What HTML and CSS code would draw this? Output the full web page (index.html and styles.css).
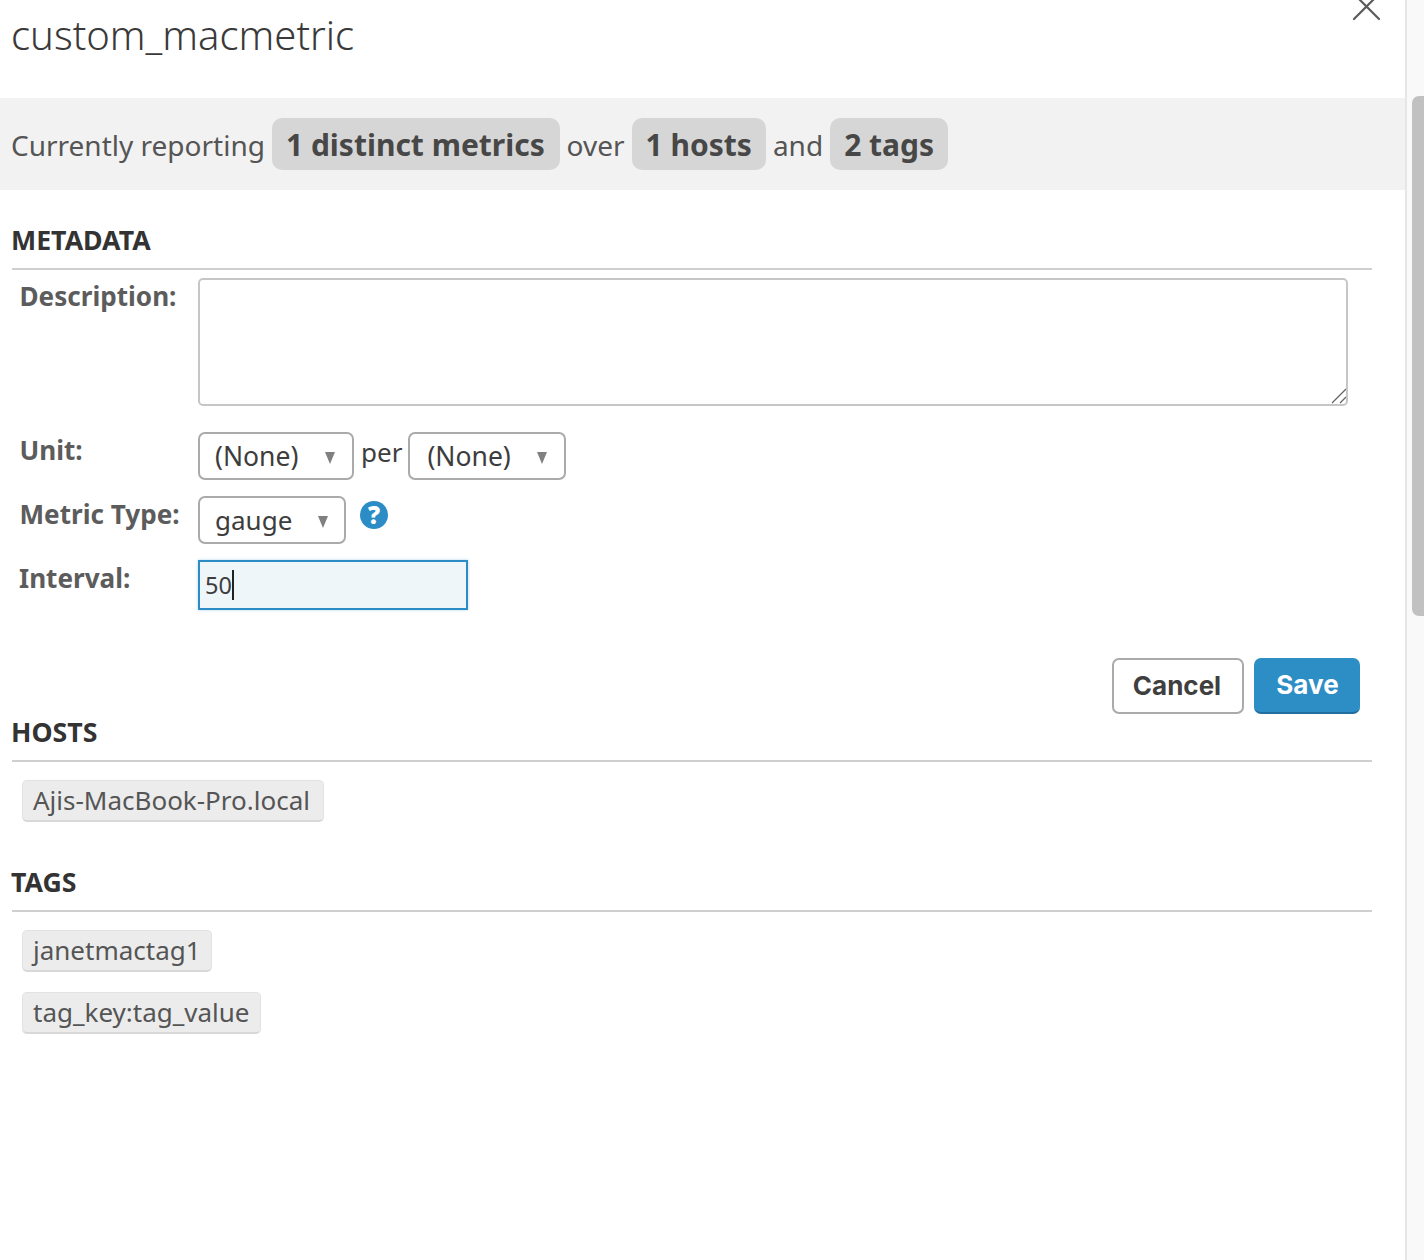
FILE: index.html
```html
<!DOCTYPE html>
<html lang="en">
<head>
<meta charset="utf-8">
<title>custom_macmetric</title>
<link rel="stylesheet" href="styles.css">
</head>
<body>
<div class="page">
  <main class="modal">
    <svg class="close" width="30" height="22" viewBox="0 0 30 22" aria-label="Close"><path d="M2 -6 L27 19 M27 -6 L2 19" fill="none" stroke="#5c5c5c" stroke-width="2.2" stroke-linecap="round"/></svg>
    <h1 class="title">custom_macmetric</h1>
    <div class="stats">
      <span class="word">Currently reporting</span><span class="pill pill-wide">1 distinct metrics</span><span class="word">over</span><span class="pill">1 hosts</span><span class="word">and</span><span class="pill">2 tags</span>
    </div>
    <section class="metadata">
      <h2 class="heading">METADATA</h2>
      <div class="form">
        <label class="label">Description:</label>
        <div class="textarea-wrap">
          <textarea class="textarea"></textarea>
          <svg class="grip" width="16" height="16" viewBox="0 0 16 16"><path d="M2 15 L16 1 M10 15 L16 9" fill="none" stroke="#666" stroke-width="1.3"/></svg>
        </div>
        <label class="label">Unit:</label>
        <div class="control-row">
          <div class="select select-unit"><span>(None)</span><i class="arrow"></i></div>
          <span class="per">per</span>
          <div class="select select-per"><span>(None)</span><i class="arrow"></i></div>
        </div>
        <label class="label">Metric Type:</label>
        <div class="control-row">
          <div class="select select-type"><span>gauge</span><i class="arrow"></i></div>
          <span class="help">?</span>
        </div>
        <label class="label label-interval">Interval:</label>
        <div class="input"><span>50</span><i class="caret"></i></div>
      </div>
      <div class="actions">
        <button class="btn btn-cancel">Cancel</button>
        <button class="btn btn-save">Save</button>
      </div>
    </section>
    <section class="hosts">
      <h2 class="heading">HOSTS</h2>
      <div class="tags"><span class="tag tag-host">Ajis-MacBook-Pro.local</span></div>
    </section>
    <section class="tags-section">
      <h2 class="heading">TAGS</h2>
      <div class="tags"><span class="tag">janetmactag1</span><span class="tag">tag_key:tag_value</span></div>
    </section>
  </main>
  <aside class="scrollbar"><div class="thumb"></div></aside>
</div>
</body>
</html>
```
FILE: styles.css
```css
* { box-sizing: border-box; }
html, body { margin: 0; height: 100%; overflow: hidden; background: #fff; }
body { font-family: "Noto Sans", "Open Sans", sans-serif; color: #3d3d3d; }
.page { display: flex; height: 1260px; width: 1424px; }
.modal { position: relative; width: 1407px; height: 1260px; border-right: 2px solid #e6e6e6; background: #fff; }
.scrollbar { width: 17px; background: #f9f9f9; padding: 96px 0 0 5px; }
.thumb { width: 12px; height: 520px; background: #c1c1c1; border-radius: 7px 0 0 7px; }
.close { position: absolute; left: 1352px; top: 0; }
.title { margin: 0; height: 98px; padding: 10px 0 0 11px; font-size: 40px; line-height: 50px; font-weight: 300; color: #3a3a3a; }
.stats { height: 92px; background: #f2f2f2; padding-left: 11px; display: flex; align-items: center; gap: 7px; font-size: 28px; color: #555; }
.word { padding-top: 2px; }
.pill { height: 52px; line-height: 54px; padding: 0 14px; background: #d6d6d6; border-radius: 10px; font-weight: 700; font-size: 30px; color: #474747; }
.pill-wide { padding-right: 14.8px; }
.metadata { padding: 28px 0 0 12px; }
.heading { margin: 0; width: 1360px; height: 52px; line-height: 44px; font-size: 26.7px; font-weight: 700; color: #333; border-bottom: 2px solid #cfcfcf; text-indent: -1px; }
.form { display: grid; grid-template-columns: 186px auto; justify-content: start; row-gap: 16px; padding-top: 8px; }
.label { font-size: 26.1px; font-weight: 700; color: #5c5c5c; padding-left: 7.5px; line-height: 36px; }
.label-interval { padding-left: 7px; }
.textarea-wrap { position: relative; width: 1150px; height: 128px; margin-bottom: 10px; }
.textarea { display: block; width: 100%; height: 100%; border: 2px solid #c6c6c6; border-radius: 5px; background: #fff; resize: none; margin: 0; }
.grip { position: absolute; right: 2px; bottom: 2px; }
.control-row { display: flex; align-items: flex-start; }
.select { height: 48px; border: 2px solid #aaa; border-radius: 7px; background: #fff; display: flex; align-items: center; justify-content: space-between; padding: 0 17px; font-size: 26.5px; color: #3d3d3d; }
.select-unit { width: 156px; padding-left: 15px; }
.select-per { width: 158px; }
.select-type { width: 148px; font-size: 26px; padding: 0 16px 0 15px; }
.arrow { width: 0; height: 0; margin-top: 3px; border-left: 5.5px solid transparent; border-right: 5.5px solid transparent; border-top: 12px solid #808080; }
.per { font-size: 26px; line-height: 40px; margin: 0 6px 0 7px; }
.help { width: 28px; height: 28px; margin: 5px 0 0 14px; border-radius: 50%; background: #2b8cc6; color: #fff; font-size: 24px; font-weight: 900; line-height: 28px; text-align: center; }
.input { grid-column: 2; width: 270px; height: 50px; border: 2px solid #2b8cc6; background: #eef6fa; display: flex; align-items: center; padding-left: 5px; font-size: 23.5px; color: #3d3d3d; box-shadow: 0 0 3px rgba(43,140,198,.35); }
.caret { width: 2px; height: 30px; background: #222; }
.actions { width: 1348px; display: flex; justify-content: flex-end; gap: 10px; margin-top: 48px; }
.btn { height: 56px; border-radius: 7px; font-family: Inter, sans-serif; font-size: 26px; font-weight: 700; padding: 0 0 2px; }
.btn-cancel { width: 132px; background: #fff; border: 2px solid #aaa; color: #3f3f3f; padding-right: 2px; }
.btn-save { width: 106px; background: #2d8ec6; border: 0; border-bottom: 2px solid #216f9f; color: #fff; padding-left: 1px; }
.hosts { padding: 0 0 0 12px; margin-top: -4px; }
.tags-section { padding: 0 0 0 12px; margin-top: 38px; }
.tags { display: flex; flex-direction: column; align-items: flex-start; gap: 20px; padding: 18px 0 0 10px; }
.tag { height: 42px; line-height: 38px; padding: 0 10px; background: #ececec; border: 1px solid #e2e2e2; border-bottom: 2px solid #d8d8d8; border-radius: 5px; font-size: 26px; color: #555; }
.tag-host { padding-right: 13px; }
```
